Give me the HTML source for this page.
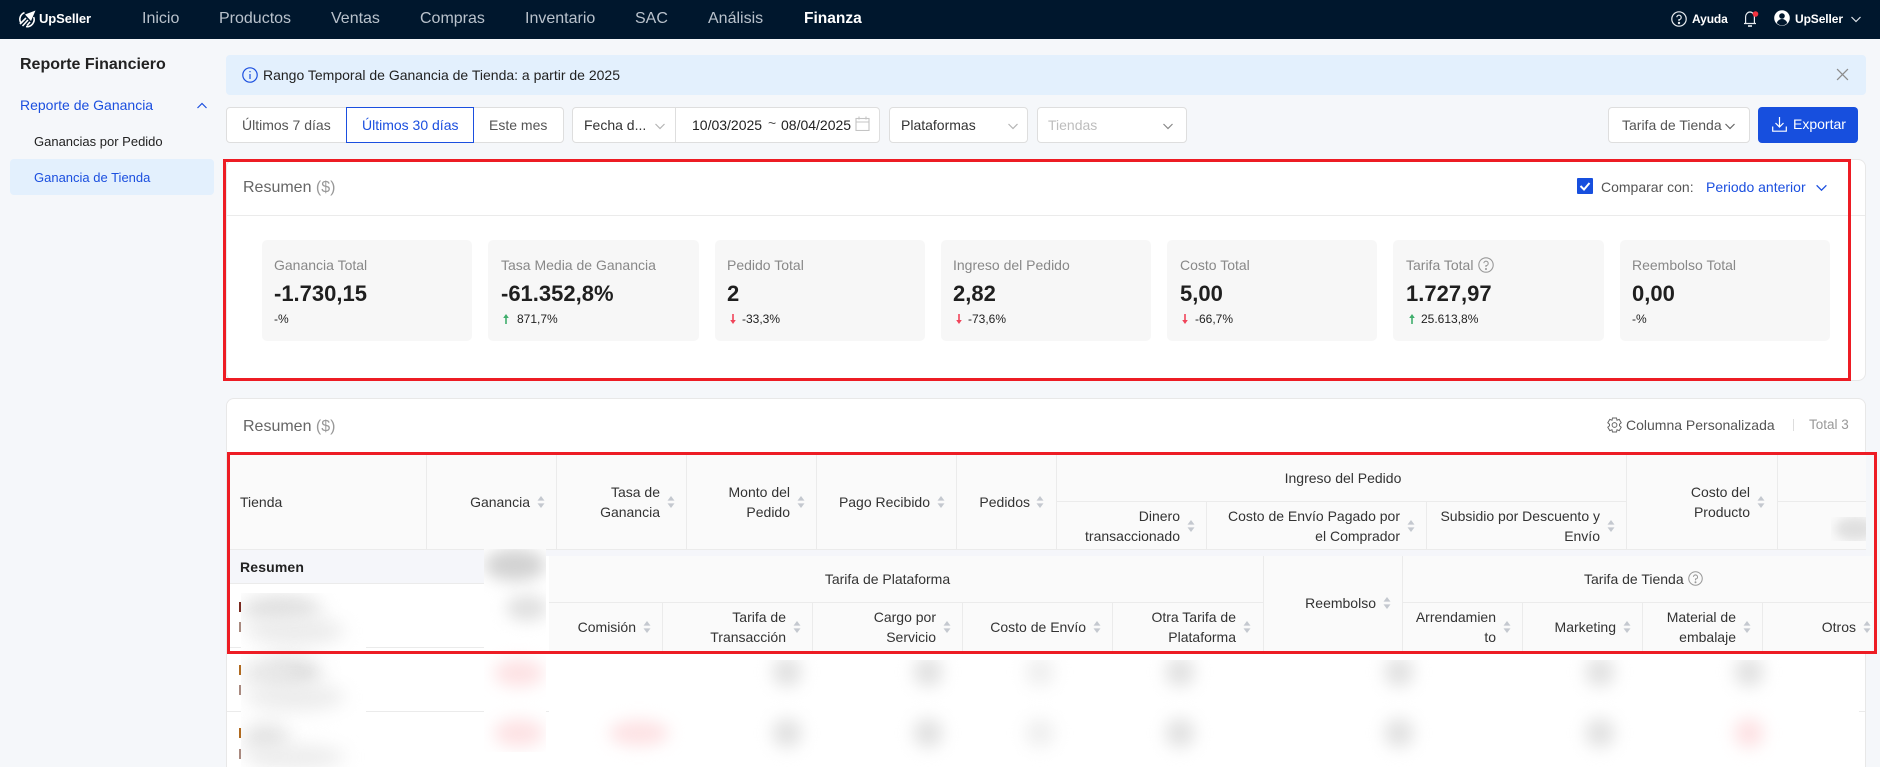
<!DOCTYPE html>
<html lang="es">
<head>
<meta charset="utf-8">
<title>Ganancia de Tienda</title>
<style>
html,body{margin:0;padding:0;width:1880px;height:767px;overflow:hidden}
body{position:relative;background:#f5f7fa;font-family:"Liberation Sans",Arial,sans-serif;font-size:14px;color:#333}
div,svg{position:absolute}
#root{left:0;top:0;width:1880px;height:767px;overflow:hidden}
.t{white-space:nowrap;line-height:20px}
.nav{font-size:16px;color:#b9c2cc;top:9px;line-height:20px;white-space:nowrap;position:absolute}
.box{background:#fff;border:1px solid #dedede;border-radius:4px;box-sizing:border-box;height:36px;top:107px}
.card{background:#f7f7f7;border-radius:5px;top:240px;height:101px}
.lb{color:#888;top:255px}
.val{font-size:22px;font-weight:700;color:#1f1f1f;top:282px;line-height:24px}
.dl{font-size:12px;color:#222;top:309px}
.vl{width:1px;background:#ebebeb}
.hl{height:1px;background:#ebebeb}
.r{text-align:right}
.red{border:3px solid #ed1c24;box-sizing:border-box}
.blob{background:#e2e2e2;filter:blur(8px);border-radius:50%;width:30px;height:30px}
.pink{background:#fde2e4}
.tk{width:2px;background:#a98a80}
</style>
</head>
<body>
<div id="root">
<svg width="0" height="0" style="left:0;top:0">
<defs>
<symbol id="s" viewBox="0 0 8 14"><path d="M4 1 L7.5 5.6 H.5Z M4 13 L.5 8.4 H7.5Z" fill="#c4c8cf"/></symbol>
<symbol id="c" viewBox="0 0 12 12"><path d="M1.5 4 L6 8.5 L10.5 4" fill="none" stroke="currentColor" stroke-width="1.2"/></symbol>
<symbol id="up" viewBox="0 0 8 12"><path d="M4 1 L6.8 5 H4.8 V11 H3.2 V5 H1.2Z" fill="#3fae6c"/></symbol>
<symbol id="dn" viewBox="0 0 8 12"><path d="M3.2 1 H4.8 V7 H6.8 L4 11 L1.2 7 H3.2Z" fill="#f0445a"/></symbol>
</defs>
</svg>

<!-- top nav -->
<div style="left:0;top:0;width:1880px;height:39px;background:#00172d"></div>
<svg style="left:18px;top:10px" width="18" height="18" viewBox="0 0 18 18" fill="none" stroke="#fff" stroke-width="1.6"><path d="M6.5 2.6 A7.2 7.2 0 0 0 2.6 12.5"/><path d="M15.7 7 A7.2 7.2 0 0 1 8 16.6"/><path d="M17.5 .5 L7 4.5 L13 11Z" fill="#fff" stroke="none"/><path d="M8 8 L2 14 M10 10 L4.5 16 M12 12 L9 15.5"/></svg>
<div class="t" style="left:39px;top:9px;color:#fff;font-size:13px;font-weight:700;letter-spacing:-.1px">UpSeller</div>
<span class="nav" style="left:142px">Inicio</span>
<span class="nav" style="left:219px">Productos</span>
<span class="nav" style="left:331px">Ventas</span>
<span class="nav" style="left:420px">Compras</span>
<span class="nav" style="left:525px">Inventario</span>
<span class="nav" style="left:635px">SAC</span>
<span class="nav" style="left:708px">Análisis</span>
<span class="nav" style="left:804px;color:#fff;font-weight:700;font-size:15.5px">Finanza</span>

<svg style="left:1671px;top:11px" width="16" height="16" viewBox="0 0 16 16" fill="none" stroke="#e8ecf0" stroke-width="1.2"><circle cx="8" cy="8" r="7.2"/><path d="M5.8 6.2 A2.2 2.2 0 1 1 8 8.6 V10"/><circle cx="8" cy="12" r=".6" fill="#e8ecf0"/></svg>
<div class="t" style="left:1692px;top:9px;color:#fff;font-size:12px;font-weight:700;letter-spacing:-.1px">Ayuda</div>
<svg style="left:1743px;top:10px" width="16" height="18" viewBox="0 0 16 18" fill="none" stroke="#e8ecf0" stroke-width="1.2"><path d="M1 13.5 H13 M2.6 13.5 V7 A4.4 5 0 0 1 11.4 7 V13.5"/><path d="M5 16 H9" stroke-width="1.6"/><circle cx="12.5" cy="4" r="2.8" fill="#f5333f" stroke="none"/></svg>
<svg style="left:1774px;top:10px" width="16" height="16" viewBox="0 0 16 16"><circle cx="8" cy="8" r="7.8" fill="#fff"/><circle cx="8" cy="6" r="2.8" fill="#00172d"/><path d="M2.8 13 A5.4 5.4 0 0 1 13.2 13 A7 7 0 0 1 2.8 13Z" fill="#00172d"/></svg>
<div class="t" style="left:1795px;top:9px;color:#fff;font-size:12px;font-weight:700;letter-spacing:-.1px">UpSeller</div>
<svg style="left:1850px;top:13px;color:#dfe4ea" width="12" height="12"><use href="#c"/></svg>

<!-- sidebar -->
<div class="t" style="left:20px;top:55px;font-size:16px;font-weight:700;color:#222">Reporte Financiero</div>
<div class="t" style="left:20px;top:95px;color:#1b4fdf">Reporte de Ganancia</div>
<svg style="left:196px;top:100px;color:#1b4fdf;transform:rotate(180deg)" width="12" height="12"><use href="#c"/></svg>
<div class="t" style="left:34px;top:132px;font-size:13px;color:#222">Ganancias por Pedido</div>
<div style="left:10px;top:159px;width:204px;height:36px;background:#e3f0fd;border-radius:4px"></div>
<div class="t" style="left:34px;top:168px;font-size:13px;color:#1b4fdf">Ganancia de Tienda</div>

<!-- alert -->
<div style="left:226px;top:55px;width:1640px;height:40px;background:#e3f0fd;border-radius:4px"></div>
<svg style="left:242px;top:67px" width="16" height="16" viewBox="0 0 16 16" fill="none" stroke="#1b4fdf" stroke-width="1.2"><circle cx="8" cy="8" r="7.2"/><path d="M8 7 V12 M8 4 V5.3"/></svg>
<div class="t" style="left:263px;top:65px;color:#222">Rango Temporal de Ganancia de Tienda: a partir de 2025</div>
<svg style="left:1836px;top:68px" width="13" height="13" viewBox="0 0 12 12" stroke="#8c8c8c" stroke-width="1.2"><path d="M1 1 L11 11 M11 1 L1 11"/></svg>

<!-- filters -->
<div class="box" style="left:226px;width:338px"></div>
<div class="t" style="left:242px;top:115px;color:#555">Últimos 7 días</div>
<div style="left:346px;top:107px;width:128px;height:36px;box-sizing:border-box;border:1px solid #1b4fdf;background:#fff"></div>
<div class="t" style="left:362px;top:115px;color:#1b4fdf">Últimos 30 días</div>
<div class="t" style="left:489px;top:115px;color:#555">Este mes</div>

<div class="box" style="left:572px;width:308px"></div>
<div class="vl" style="left:675px;top:108px;height:34px;background:#dedede"></div>
<div class="t" style="left:584px;top:115px;color:#333">Fecha d...</div>
<svg style="left:654px;top:120px;color:#b5b5b5" width="12" height="12"><use href="#c"/></svg>
<div class="t" style="left:692px;top:115px;color:#222">10/03/2025</div>
<div class="t" style="left:768px;top:113px;color:#555">~</div>
<div class="t" style="left:781px;top:115px;color:#222">08/04/2025</div>
<svg style="left:855px;top:116px" width="15" height="15" viewBox="0 0 15 15" fill="none" stroke="#c4c4c4" stroke-width="1.1"><rect x="1" y="2.5" width="13" height="12"/><path d="M1 6 H14 M4 .5 V3.5 M11 .5 V3.5"/></svg>

<div class="box" style="left:889px;width:139px"></div>
<div class="t" style="left:901px;top:115px;color:#333">Plataformas</div>
<svg style="left:1007px;top:120px;color:#b5b5b5" width="12" height="12"><use href="#c"/></svg>
<div class="box" style="left:1037px;width:150px"></div>
<div class="t" style="left:1048px;top:115px;color:#bdbdbd">Tiendas</div>
<svg style="left:1162px;top:120px;color:#888" width="12" height="12"><use href="#c"/></svg>

<div class="box" style="left:1608px;width:142px"></div>
<div class="t" style="left:1622px;top:115px;color:#555">Tarifa de Tienda</div>
<svg style="left:1724px;top:120px;color:#666" width="12" height="12"><use href="#c"/></svg>
<div style="left:1758px;top:107px;width:100px;height:36px;background:#174fde;border-radius:4px"></div>
<svg style="left:1772px;top:117px" width="15" height="15" viewBox="0 0 15 15" fill="none" stroke="#fff" stroke-width="1.2"><path d="M7.5 0 V10 M3.5 6 L7.5 10 L11.5 6 M.7 9.5 V14.2 H14.3 V9.5"/></svg>
<div class="t" style="left:1793px;top:114px;color:#fff">Exportar</div>

<!-- card 1 -->
<div style="left:226px;top:159px;width:1640px;height:222px;background:#fff;border:1px solid #e8e8e8;border-radius:8px;box-sizing:border-box"></div>
<div class="t" style="left:243px;top:178px;font-size:16px;color:#666">Resumen <span style="color:#999">($)</span></div>
<div class="hl" style="left:227px;top:215px;width:1638px"></div>
<div style="left:1577px;top:178px;width:16px;height:16px;background:#174fde;border-radius:1px"></div>
<svg style="left:1577px;top:178px" width="16" height="16" viewBox="0 0 16 16" fill="none" stroke="#fff" stroke-width="2"><path d="M3.5 8 L7 11.5 L12.5 5"/></svg>
<div class="t" style="left:1601px;top:177px;color:#555">Comparar con:</div>
<div class="t" style="left:1706px;top:177px;color:#1b4fdf">Periodo anterior</div>
<svg style="left:1815px;top:181px;color:#1b4fdf" width="13" height="13"><use href="#c"/></svg>

<div class="card" style="left:262px;width:210px"></div>
<div class="t lb" style="left:274px">Ganancia Total</div>
<div class="t val" style="left:274px">-1.730,15</div>
<div class="t dl" style="left:274px">-%</div>

<div class="card" style="left:488px;width:211px"></div>
<div class="t lb" style="left:501px">Tasa Media de Ganancia</div>
<div class="t val" style="left:501px">-61.352,8%</div>
<svg style="left:502px;top:313px" width="8" height="12"><use href="#up"/></svg>
<div class="t dl" style="left:517px">871,7%</div>

<div class="card" style="left:715px;width:210px"></div>
<div class="t lb" style="left:727px">Pedido Total</div>
<div class="t val" style="left:727px">2</div>
<svg style="left:729px;top:313px" width="8" height="12"><use href="#dn"/></svg>
<div class="t dl" style="left:742px">-33,3%</div>

<div class="card" style="left:941px;width:210px"></div>
<div class="t lb" style="left:953px">Ingreso del Pedido</div>
<div class="t val" style="left:953px">2,82</div>
<svg style="left:955px;top:313px" width="8" height="12"><use href="#dn"/></svg>
<div class="t dl" style="left:968px">-73,6%</div>

<div class="card" style="left:1167px;width:210px"></div>
<div class="t lb" style="left:1180px">Costo Total</div>
<div class="t val" style="left:1180px">5,00</div>
<svg style="left:1181px;top:313px" width="8" height="12"><use href="#dn"/></svg>
<div class="t dl" style="left:1195px">-66,7%</div>

<div class="card" style="left:1393px;width:211px"></div>
<div class="t lb" style="left:1406px">Tarifa Total</div>
<svg style="left:1478px;top:257px" width="16" height="16" viewBox="0 0 16 16" fill="none" stroke="#999" stroke-width="1.1"><circle cx="8" cy="8" r="7.2"/><path d="M5.8 6.2 A2.2 2.2 0 1 1 8 8.6 V10"/><circle cx="8" cy="12" r=".5" fill="#999"/></svg>
<div class="t val" style="left:1406px">1.727,97</div>
<svg style="left:1408px;top:313px" width="8" height="12"><use href="#up"/></svg>
<div class="t dl" style="left:1421px">25.613,8%</div>

<div class="card" style="left:1620px;width:210px"></div>
<div class="t lb" style="left:1632px">Reembolso Total</div>
<div class="t val" style="left:1632px">0,00</div>
<div class="t dl" style="left:1632px">-%</div>

<!-- card 2 -->
<div style="left:226px;top:398px;width:1640px;height:369px;background:#fff;border:1px solid #e8e8e8;border-bottom:0;border-radius:8px 8px 0 0;box-sizing:border-box"></div>
<div class="t" style="left:243px;top:417px;font-size:16px;color:#666">Resumen <span style="color:#999">($)</span></div>
<svg style="left:1607px;top:417px" width="15" height="16" viewBox="0 0 15 16" fill="none" stroke="#666" stroke-width="1"><path d="M5.5 1 H9.5 L10 3.2 L12.2 2.4 L14.2 5.8 L12.5 7.2 V8.8 L14.2 10.2 L12.2 13.6 L10 12.8 L9.5 15 H5.5 L5 12.8 L2.8 13.6 L.8 10.2 L2.5 8.8 V7.2 L.8 5.8 L2.8 2.4 L5 3.2Z"/><circle cx="7.5" cy="8" r="2.4"/></svg>
<div class="t" style="left:1626px;top:415px;color:#555">Columna Personalizada</div>
<div class="vl" style="left:1793px;top:419px;height:12px;background:#ddd"></div>
<div class="t" style="left:1809px;top:415px;color:#999;font-size:13.5px">Total 3</div>

<!-- header 1 -->
<div style="left:230px;top:455px;width:1636px;height:94px;background:#fafafa"></div>
<div class="hl" style="left:230px;top:549px;width:1636px"></div>
<div class="vl" style="left:426px;top:455px;height:94px"></div>
<div class="vl" style="left:556px;top:455px;height:94px"></div>
<div class="vl" style="left:686px;top:455px;height:94px"></div>
<div class="vl" style="left:816px;top:455px;height:94px"></div>
<div class="vl" style="left:956px;top:455px;height:94px"></div>
<div class="vl" style="left:1056px;top:455px;height:94px"></div>
<div class="vl" style="left:1206px;top:501px;height:48px"></div>
<div class="vl" style="left:1426px;top:501px;height:48px"></div>
<div class="vl" style="left:1626px;top:455px;height:94px"></div>
<div class="vl" style="left:1777px;top:455px;height:94px"></div>
<div class="hl" style="left:1056px;top:501px;width:570px"></div>
<div class="hl" style="left:1777px;top:501px;width:89px"></div>

<div class="t" style="left:240px;top:492px">Tienda</div>
<div class="t r" style="right:1350px;top:492px">Ganancia</div>
<svg style="left:537px;top:495px" width="8" height="14"><use href="#s"/></svg>
<div class="t r" style="right:1220px;top:482px">Tasa de<br>Ganancia</div>
<svg style="left:667px;top:495px" width="8" height="14"><use href="#s"/></svg>
<div class="t r" style="right:1090px;top:482px">Monto del<br>Pedido</div>
<svg style="left:797px;top:495px" width="8" height="14"><use href="#s"/></svg>
<div class="t r" style="right:950px;top:492px">Pago Recibido</div>
<svg style="left:937px;top:495px" width="8" height="14"><use href="#s"/></svg>
<div class="t r" style="right:850px;top:492px">Pedidos</div>
<svg style="left:1036px;top:495px" width="8" height="14"><use href="#s"/></svg>
<div class="t" style="left:1058px;width:570px;text-align:center;top:468px">Ingreso del Pedido</div>
<div class="t r" style="right:700px;top:506px">Dinero<br>transaccionado</div>
<svg style="left:1187px;top:519px" width="8" height="14"><use href="#s"/></svg>
<div class="t r" style="right:480px;top:506px">Costo de Envío Pagado por<br>el Comprador</div>
<svg style="left:1407px;top:519px" width="8" height="14"><use href="#s"/></svg>
<div class="t r" style="right:280px;top:506px">Subsidio por Descuento y<br>Envío</div>
<svg style="left:1607px;top:519px" width="8" height="14"><use href="#s"/></svg>
<div class="t r" style="right:130px;top:482px">Costo del<br>Producto</div>
<svg style="left:1757px;top:495px" width="8" height="14"><use href="#s"/></svg>
<div style="left:1831px;top:517px;width:35px;height:24px;background:#fafafa;overflow:hidden"><div class="blob" style="left:4px;top:0;width:40px;height:24px;background:#e0e0e0;filter:blur(5px)"></div></div>

<!-- rows and blur -->
<div style="left:230px;top:550px;width:1636px;height:6px;background:#f5f6fa"></div>
<div style="left:230px;top:550px;width:254px;height:33px;background:#f5f6fa"></div>
<div class="hl" style="left:230px;top:583px;width:254px"></div>
<div class="t" style="left:240px;top:557px;font-weight:700;color:#222;letter-spacing:.15px">Resumen</div>
<div class="hl" style="left:230px;top:647px;width:254px"></div>
<div class="hl" style="left:227px;top:711px;width:351px"></div>
<div class="hl" style="left:1800px;top:711px;width:65px"></div>

<div class="tk" style="left:239px;top:602px;height:10px;background:#7a2a20"></div>
<div class="tk" style="left:239px;top:622px;height:10px"></div>
<div class="tk" style="left:239px;top:665px;height:10px;background:#b06a20"></div>
<div class="tk" style="left:239px;top:685px;height:10px"></div>
<div class="tk" style="left:239px;top:728px;height:10px;background:#b06a20"></div>
<div class="tk" style="left:239px;top:749px;height:10px"></div>

<div style="left:241px;top:593px;width:125px;height:174px;background:#fff;overflow:hidden">
  <div class="blob" style="left:0;top:2px;width:80px;height:28px;background:#e0e0e0;filter:blur(9px)"></div>
  <div class="blob" style="left:4px;top:24px;width:100px;height:28px;background:#ebebeb;filter:blur(9px)"></div>
  <div class="blob" style="left:24px;top:66px;width:56px;height:28px;background:#dcdcdc;filter:blur(9px)"></div>
  <div class="blob" style="left:0;top:66px;width:56px;height:28px;background:#e8e8e8;filter:blur(9px)"></div>
  <div class="blob" style="left:4px;top:90px;width:100px;height:28px;background:#ececec;filter:blur(9px)"></div>
  <div class="blob" style="left:2px;top:130px;width:46px;height:30px;background:#e4e4e4;filter:blur(9px)"></div>
  <div class="blob" style="left:4px;top:152px;width:100px;height:24px;background:#ececec;filter:blur(9px)"></div>
</div>
<div style="left:484px;top:549px;width:62px;height:203px;background:#fff;overflow:hidden">
  <div class="blob" style="left:0;top:0;width:62px;height:32px;background:#d2d2d2;filter:blur(8px)"></div>
  <div class="blob" style="left:22px;top:46px;width:42px;height:26px;background:#e0e0e0;filter:blur(8px)"></div>
  <div class="blob pink" style="left:10px;top:110px;width:50px;height:28px"></div>
  <div class="blob pink" style="left:10px;top:170px;width:50px;height:28px"></div>
</div>

<div style="left:549px;top:660px;width:1310px;height:107px;background:#fff;overflow:hidden">
  <div class="blob pink" style="left:60px;top:60px;width:60px;height:26px"></div>
  <div class="blob" style="left:223px;top:-3px"></div>
  <div class="blob" style="left:364px;top:-3px"></div>
  <div class="blob" style="left:476px;top:-3px;background:#f0f0f0"></div>
  <div class="blob" style="left:616px;top:-3px"></div>
  <div class="blob" style="left:835px;top:-3px"></div>
  <div class="blob" style="left:1036px;top:-3px"></div>
  <div class="blob" style="left:1185px;top:-3px"></div>
  <div class="blob" style="left:223px;top:58px"></div>
  <div class="blob" style="left:364px;top:58px"></div>
  <div class="blob" style="left:476px;top:58px;background:#f0f0f0"></div>
  <div class="blob" style="left:616px;top:58px"></div>
  <div class="blob" style="left:835px;top:58px"></div>
  <div class="blob" style="left:1036px;top:58px"></div>
  <div class="blob pink" style="left:1185px;top:58px"></div>
</div>

<!-- header 2 -->
<div style="left:549px;top:556px;width:1323px;height:95px;background:#fafafa"></div>
<div class="hl" style="left:549px;top:602px;width:714px"></div>
<div class="hl" style="left:1403px;top:602px;width:469px"></div>
<div class="vl" style="left:662px;top:602px;height:49px"></div>
<div class="vl" style="left:812px;top:602px;height:49px"></div>
<div class="vl" style="left:962px;top:602px;height:49px"></div>
<div class="vl" style="left:1112px;top:602px;height:49px"></div>
<div class="vl" style="left:1263px;top:556px;height:95px"></div>
<div class="vl" style="left:1402px;top:556px;height:95px"></div>
<div class="vl" style="left:1522px;top:602px;height:49px"></div>
<div class="vl" style="left:1642px;top:602px;height:49px"></div>
<div class="vl" style="left:1762px;top:602px;height:49px"></div>

<div class="t" style="left:549px;width:677px;text-align:center;top:569px">Tarifa de Plataforma</div>
<div class="t" style="left:1584px;top:569px">Tarifa de Tienda</div>
<svg style="left:1688px;top:571px" width="15" height="15" viewBox="0 0 16 16" fill="none" stroke="#999" stroke-width="1.1"><circle cx="8" cy="8" r="7.2"/><path d="M5.8 6.2 A2.2 2.2 0 1 1 8 8.6 V10"/><circle cx="8" cy="12" r=".5" fill="#999"/></svg>
<div class="t r" style="right:504px;top:593px">Reembolso</div>
<svg style="left:1383px;top:596px" width="8" height="14"><use href="#s"/></svg>
<div class="t r" style="right:1244px;top:617px">Comisión</div>
<svg style="left:643px;top:620px" width="8" height="14"><use href="#s"/></svg>
<div class="t r" style="right:1094px;top:607px">Tarifa de<br>Transacción</div>
<svg style="left:793px;top:620px" width="8" height="14"><use href="#s"/></svg>
<div class="t r" style="right:944px;top:607px">Cargo por<br>Servicio</div>
<svg style="left:943px;top:620px" width="8" height="14"><use href="#s"/></svg>
<div class="t r" style="right:794px;top:617px">Costo de Envío</div>
<svg style="left:1093px;top:620px" width="8" height="14"><use href="#s"/></svg>
<div class="t r" style="right:644px;top:607px">Otra Tarifa de<br>Plataforma</div>
<svg style="left:1243px;top:620px" width="8" height="14"><use href="#s"/></svg>
<div class="t r" style="right:384px;top:607px">Arrendamien<br>to</div>
<svg style="left:1503px;top:620px" width="8" height="14"><use href="#s"/></svg>
<div class="t r" style="right:264px;top:617px">Marketing</div>
<svg style="left:1623px;top:620px" width="8" height="14"><use href="#s"/></svg>
<div class="t r" style="right:144px;top:607px">Material de<br>embalaje</div>
<svg style="left:1743px;top:620px" width="8" height="14"><use href="#s"/></svg>
<div class="t r" style="right:24px;top:617px">Otros</div>
<svg style="left:1863px;top:620px" width="8" height="14"><use href="#s"/></svg>

<!-- red annotation boxes -->
<div class="red" style="left:223px;top:159px;width:1628px;height:222px"></div>
<div class="red" style="left:227px;top:452px;width:1650px;height:202px"></div>
</div>
</body>
</html>
